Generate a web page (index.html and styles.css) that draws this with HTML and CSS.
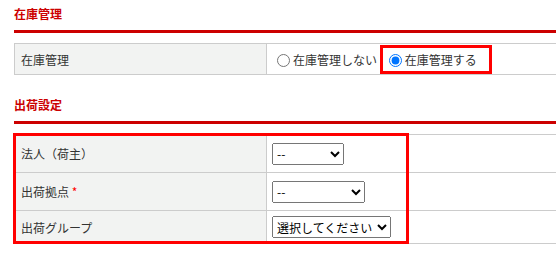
FILE: index.html
```html
<!DOCTYPE html>
<html lang="ja">
<head>
    <meta charset="UTF-8">
    <title>在庫・出荷設定</title>
    <link rel="stylesheet" href="styles.css">
</head>
<body>
    <div class="page">
        <div class="section">
            <h2 class="section-title">在庫管理</h2>
            <table class="form-table">
                <tr>
                    <th>在庫管理</th>
                    <td>
                        <label class="radio"><input type="radio" name="stock">在庫管理しない</label>
                        <label class="radio mark"><input type="radio" name="stock" checked>在庫管理する</label>
                    </td>
                </tr>
            </table>
        </div>

        <div class="section second">
            <h2 class="section-title">出荷設定</h2>
            <div class="table-wrap">
                <table class="form-table rows">
                    <tr>
                        <th>法人（荷主）</th>
                        <td><select class="sel-short"><option>--</option></select></td>
                    </tr>
                    <tr>
                        <th>出荷拠点 <span class="req">*</span></th>
                        <td><select class="sel-mid"><option>--</option></select></td>
                    </tr>
                    <tr class="last">
                        <th>出荷グループ</th>
                        <td><select class="sel-long"><option>選択してください</option></select></td>
                    </tr>
                </table>
                <div class="mark-box"></div>
            </div>
        </div>
    </div>
</body>
</html>
```

FILE: styles.css
```css
body {
    margin: 0;
    background: #fff;
    font-family: "Noto Sans CJK JP", "Noto Sans", sans-serif;
    font-size: 12px;
    color: #333;
}
.page {
    padding-left: 14px;
}
.section-title {
    margin: 0;
    padding: 5px 0 7px;
    line-height: 18px;
    font-size: 12px;
    font-weight: bold;
    color: #cc0000;
    border-bottom: 3px solid #cc0000;
}
.second {
    margin-top: 16px;
}
.form-table {
    width: 100%;
    margin-top: 10px;
    border-collapse: collapse;
}
.form-table th,
.form-table td {
    border: 1px solid #ccc;
    height: 30px;
    padding: 0 5px;
    text-align: left;
    font-weight: normal;
}
.form-table td {
    border-right: none;
}
.form-table th {
    width: 240px;
    background: #f2f3f2;
    padding-left: 6px;
}
.rows th,
.rows td {
    height: 37px;
}
.rows .last th,
.rows .last td {
    height: 32px;
}
.radio {
    display: inline-block;
    vertical-align: middle;
}
.radio input {
    margin: 0 3px 0 5px;
    vertical-align: -2px;
}
.mark {
    border: 3px solid #ff0000;
    padding: 3px 12px 3px 1px;
}
.req {
    color: #ff0000;
}
select {
    font-family: inherit;
    font-size: 12px;
    height: 22px;
    color: #000;
}
.sel-short { width: 72px; }
.sel-mid { width: 93px; }
.sel-long { width: 119px; }
.table-wrap {
    position: relative;
}
.mark-box {
    position: absolute;
    left: -1px;
    top: -1px;
    width: 390px;
    height: 105px;
    border: 3px solid #ff0000;
}
```
